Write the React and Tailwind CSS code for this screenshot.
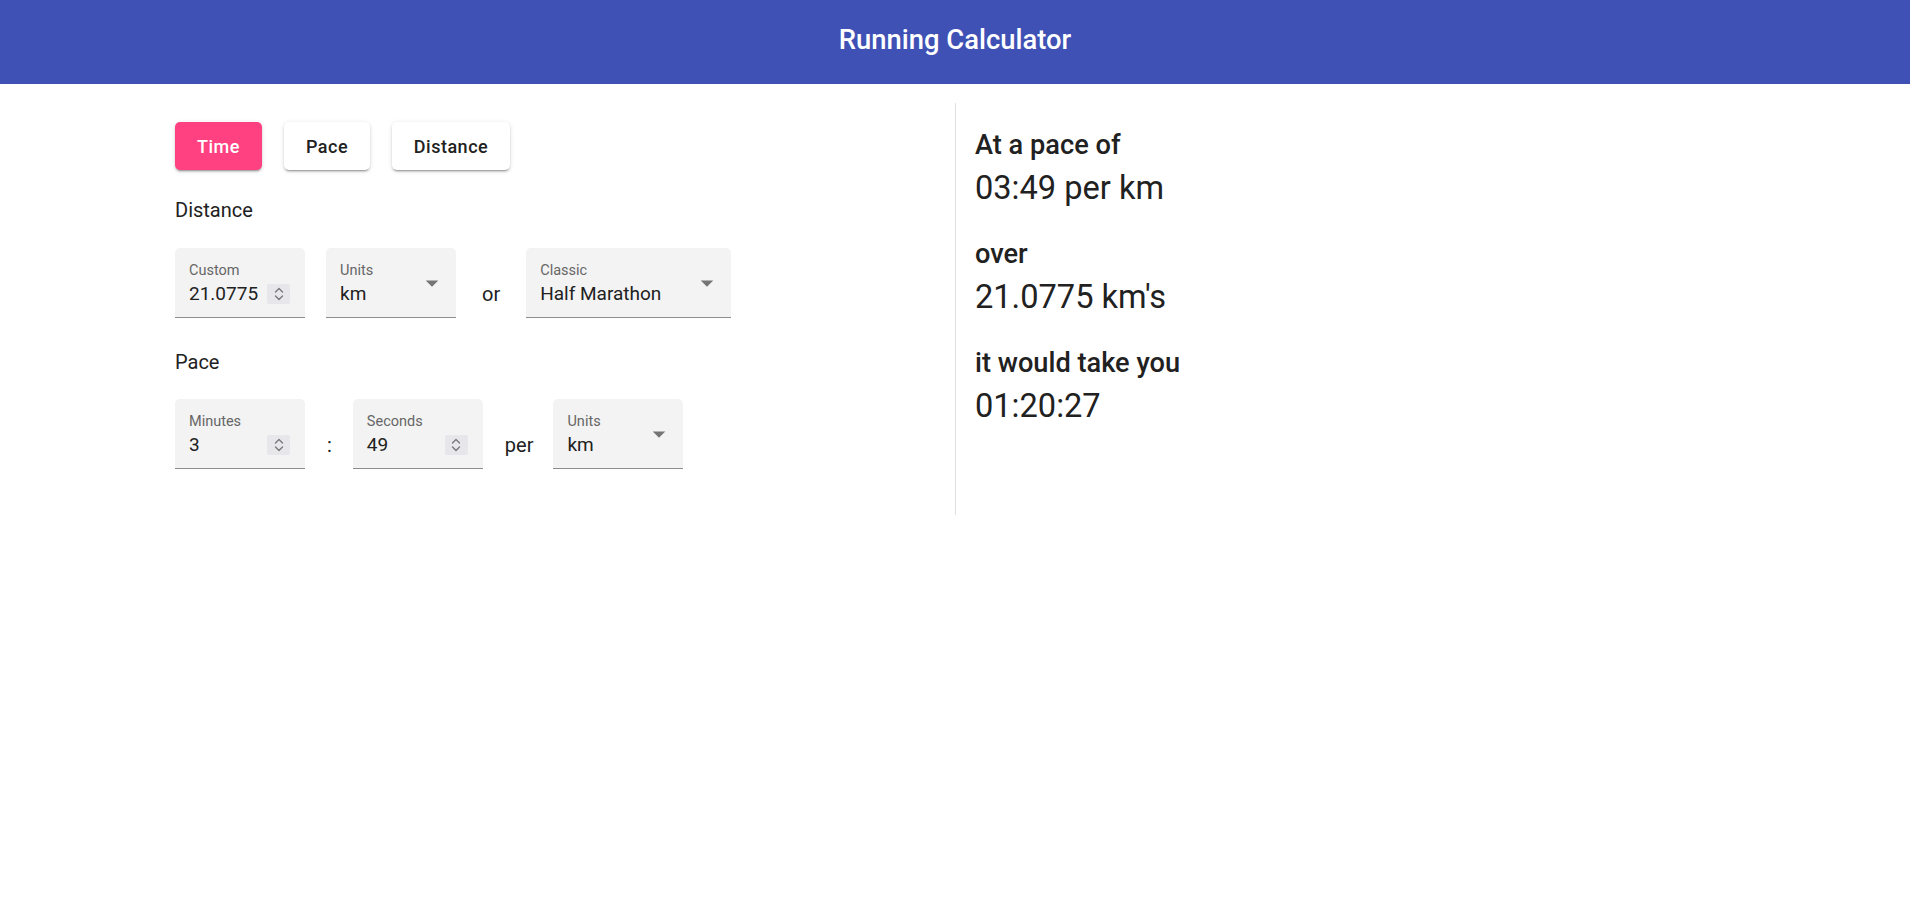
import React from "react";

function Spinner() {
  return (
    <div className="flex h-[20px] w-[23px] flex-col items-center justify-center rounded-[2px] bg-[#e6e6eb]">
      <svg width="10" height="18" viewBox="0 0 10 18" fill="none">
        <path d="M1.5 7 L5 3.5 L8.5 7" stroke="#777777" strokeWidth="1.3" strokeLinecap="round" strokeLinejoin="round" />
        <path d="M1.5 11 L5 14.5 L8.5 11" stroke="#777777" strokeWidth="1.3" strokeLinecap="round" strokeLinejoin="round" />
      </svg>
    </div>
  );
}

function Arrow() {
  return (
    <svg className="absolute right-[9px] top-[20px] h-[30px] w-[30px]" viewBox="0 0 24 24">
      <path d="M7 10l5 5 5-5z" fill="#757575" />
    </svg>
  );
}

function Field({ label, value, className, kind }) {
  return (
    <div
      className={
        "relative flex h-[70px] flex-col rounded-t-[5px] border-b border-[#8d8d8d] bg-[#f3f3f3] pl-[14px] pr-[15px] pt-[15px] " +
        className
      }
    >
      <span className="text-[14.5px] leading-[15px] text-[#666666]">{label}</span>
      <div className="mt-[4px] flex h-[24px] items-center justify-between">
        <span className="text-[19px] leading-[24px] text-[#212121]">{value}</span>
        {kind === "number" ? <Spinner /> : null}
      </div>
      {kind === "select" ? <Arrow /> : null}
    </div>
  );
}

function Btn({ children, active, className }) {
  return (
    <button
      className={
        "flex h-[48px] items-center justify-center rounded-[5px] text-[18px] font-medium tracking-[0.5px] shadow-[0_3px_1px_-2px_rgba(0,0,0,0.2),0_2px_2px_0_rgba(0,0,0,0.14),0_1px_5px_0_rgba(0,0,0,0.12)] " +
        (active ? "bg-[#ff4081] text-white " : "bg-white text-[#212121] ") +
        className
      }
    >
      {children}
    </button>
  );
}

function Result({ heading, value }) {
  return (
    <div className="mb-[23px]">
      <div className="text-[27.2px] font-medium leading-[40px] text-[#212121]">{heading}</div>
      <div className="text-[32.6px] leading-[46px] text-[#212121]">{value}</div>
    </div>
  );
}

export default function App() {
  return (
    <div className="min-h-[918px] bg-white font-['Roboto',sans-serif] text-[#212121]">
      <header className="flex h-[84px] items-center justify-center bg-[#3f51b5]">
        <h1 className="mb-[2px] text-[27.4px] font-medium text-white">Running Calculator</h1>
      </header>
      <div className="mx-auto mt-[19px] flex h-[412px] w-[1600px] px-[20px]">
        <div className="flex w-[780px] flex-col pt-[19px]">
          <div className="flex gap-[22px]">
            <Btn active className="w-[87px]">Time</Btn>
            <Btn className="w-[86px]">Pace</Btn>
            <Btn className="w-[118px]">Distance</Btn>
          </div>
          <div className="mt-[25px] text-[20px] leading-[30px]">Distance</div>
          <div className="mt-[23px] flex items-start gap-[21px]">
            <Field label="Custom" value="21.0775" kind="number" className="w-[130px]" />
            <Field label="Units" value="km" kind="select" className="w-[130px]" />
            <span className="mb-[12px] self-end px-[5px] text-[20px] leading-[24px]">or</span>
            <Field label="Classic" value="Half Marathon" kind="select" className="w-[205px]" />
          </div>
          <div className="mt-[29px] text-[20px] leading-[30px]">Pace</div>
          <div className="mt-[22px] flex items-start">
            <Field label="Minutes" value="3" kind="number" className="w-[130px]" />
            <span className="mb-[12px] ml-[22px] mr-[21px] self-end text-[20px] leading-[24px]">:</span>
            <Field label="Seconds" value="49" kind="number" className="w-[130px]" />
            <span className="mb-[12px] ml-[22px] mr-[20px] self-end text-[20px] leading-[24px]">per</span>
            <Field label="Units" value="km" kind="select" className="w-[130px]" />
          </div>
        </div>
        <div className="flex w-[780px] flex-col border-l border-[#e0e0e0] pl-[19px] pt-[22px]">
          <Result heading="At a pace of" value="03:49 per km" />
          <Result heading="over" value="21.0775 km's" />
          <Result heading="it would take you" value="01:20:27" />
        </div>
      </div>
    </div>
  );
}
